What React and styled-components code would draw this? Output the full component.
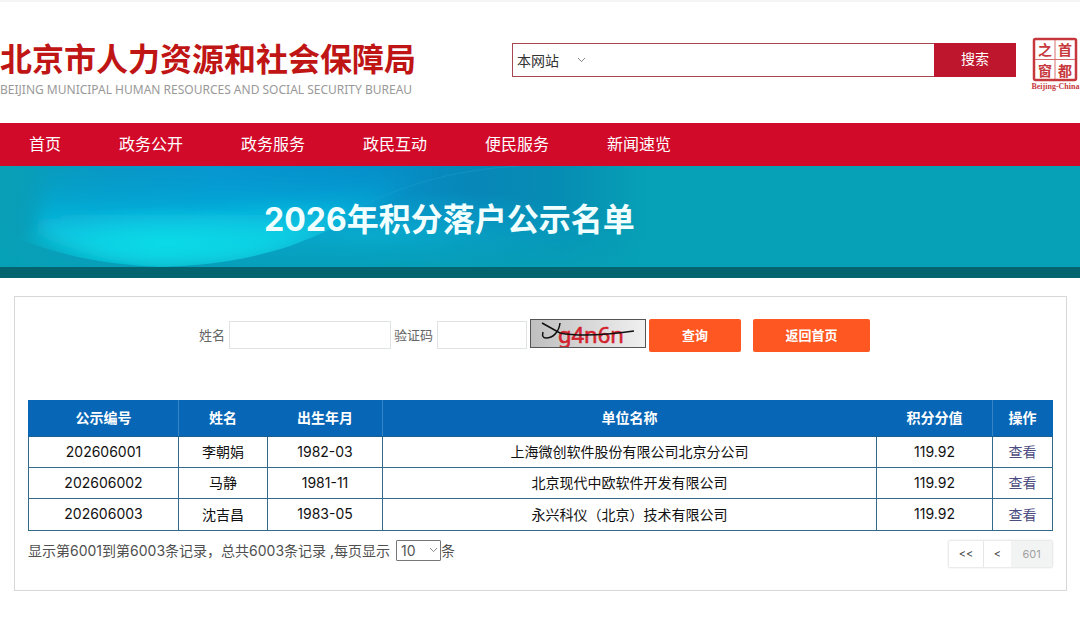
import React from "react";
import styled, { createGlobalStyle } from "styled-components";

const GlobalStyle = createGlobalStyle`
  * { box-sizing: border-box; }
  body {
    margin: 0;
    background: #fff;
    color: #111;
    font-family: Inter, "Noto Sans CJK SC", sans-serif;
    font-size: 14px;
  }
  button, input, select { font-family: inherit; font-size: inherit; }
  a { text-decoration: none; color: inherit; }
`;

const Header = styled.header`
  display: flex;
  align-items: flex-start;
  height: 123px;
  padding-top: 35px;
  border-top: 2px solid #f5f5f5;
`;

const Brand = styled.a`
  flex: none;
  width: 416px;
  padding-top: 1px;
  white-space: nowrap;
`;

const BrandName = styled.h1`
  margin: 0;
  font-size: 32px;
  line-height: 44px;
  font-weight: 700;
  color: #c01515;
`;

const BrandLatin = styled.p`
  margin: 0;
  font-family: "Noto Sans", sans-serif;
  font-size: 12px;
  line-height: 16px;
  color: #999;
`;

const Search = styled.form`
  display: flex;
  flex: 1;
  height: 34px;
  margin: 6px 15px 0 96px;
  border: 1px solid #a5484f;
`;

const SelectWrap = styled.span`
  position: relative;
  display: inline-flex;
  align-items: center;

  svg {
    position: absolute;
    right: ${(p) => p.$inset}px;
    pointer-events: none;
  }
`;

const ScopeSelect = styled.select`
  width: 80px;
  height: 28px;
  padding: 0 4px;
  border: 0;
  background: transparent;
  color: #333;
  appearance: none;
`;

const SearchInput = styled.input`
  flex: 1;
  min-width: 0;
  border: 0;
  background: transparent;
  outline: none;
`;

const SearchButton = styled.button`
  width: 82px;
  margin: -1px;
  padding: 0 0 4px;
  border: 0;
  background: #bd162d;
  color: #fff;
`;

const SealLink = styled.a`
  flex: none;
  width: 49px;
  height: 54px;
`;

const Nav = styled.nav`
  display: flex;
  gap: 58px;
  height: 43px;
  padding: 0 29px;
  background: #d20a2a;
  color: #fff;
  font-size: 16px;
  line-height: 42px;
`;

const Banner = styled.section`
  position: relative;
  height: 112px;
  padding-left: 264px;
  overflow: hidden;
  background: #06a1b6;
  border-bottom: 11px solid #04646f;

  svg {
    position: absolute;
    top: 0;
    left: 0;
  }
`;

const BannerTitle = styled.h2`
  position: relative;
  margin: 0;
  font-size: 32px;
  line-height: 108px;
  font-weight: 700;
  color: #f2ffff;
`;

const Panel = styled.main`
  margin: 18px 13px 0 14px;
  padding: 22px 13px;
  border: 1px solid #d8d8d8;
`;

const Filter = styled.form`
  display: flex;
  justify-content: center;
  align-items: center;
  height: 33px;
  padding-right: 12px;
  font-size: 13px;
  color: #666;
`;

const Field = styled.label`
  display: flex;
  align-items: center;
  gap: 4px;
  height: 31px;
  margin: 0 3px 2px 0;
`;

const TextInput = styled.input`
  width: ${(p) => p.$width}px;
  height: 28px;
  border: 1px solid #dfe3e3;
  background: #fff;
  outline: none;
`;

const Captcha = styled.svg`
  align-self: flex-start;
  width: 116px;
  height: 29px;
  border: 1px solid #555;
  background: linear-gradient(90deg, #bfbfbf, #f0f0f0);
`;

const ActionButton = styled.button`
  width: ${(p) => p.$width}px;
  height: 33px;
  margin-left: ${(p) => p.$gap}px;
  padding: 0 0 3px;
  border: 0;
  border-radius: 2px;
  background: #ff5722;
  color: #fff;
  font-size: 13px;
  font-weight: 700;
`;

const Table = styled.table`
  width: 100%;
  margin-top: 48px;
  border-collapse: collapse;
  table-layout: fixed;
  text-align: center;
`;

const HeadCell = styled.th`
  width: ${(p) => (p.$width ? `${p.$width}px` : "auto")};
  height: 36px;
  padding: 0 0 4px;
  border: 1px solid #0766b6;
  border-right-color: ${(p) => (p.$divider ? "#3484c6" : "#0766b6")};
  border-bottom-color: #17608f;
  background: #0766b6;
  color: #fff;
  font-weight: 700;
`;

const Cell = styled.td`
  height: 31px;
  padding: 0 0 2px;
  border: 1px solid #33698a;

  tr:last-child > & { height: 32px; }
`;

const ViewLink = styled.a`
  color: #4c4c80;
`;

const Footer = styled.footer`
  display: flex;
  justify-content: space-between;
  margin-top: 9px;
  color: #505050;
`;

const Summary = styled.label`
  display: flex;
  align-items: center;
  height: 20px;
  white-space: pre;
`;

const SizeSelect = styled.select`
  width: 45px;
  height: 21px;
  margin-left: 6px;
  padding: 0 4px;
  border: 1px solid #777;
  border-radius: 1px;
  background: #fff;
  color: #555;
  appearance: none;
`;

const Pager = styled.div`
  display: flex;
  height: 28px;
  border: 1px solid #ebebeb;
  border-radius: 2px;
  box-shadow: 0 0 2px #e4e4e4;
`;

const PageButton = styled.button`
  width: ${(p) => p.$width}px;
  padding: 0;
  border: 0;
  border-left: ${(p) => (p.$divided ? "1px solid #e6e6e6" : "0")};
  background: ${(p) => (p.disabled ? "#f2f4f4" : "#fff")};
  color: ${(p) => (p.disabled ? "#a0a0a0" : "#444")};
  font-size: 11px;
`;

const Chevron = () => (
  <svg width="9" height="6" viewBox="0 0 9 6" fill="none" stroke="#888" aria-hidden="true">
    <path d="M1 1l3.5 3.6L8 1" />
  </svg>
);

const Seal = () => (
  <svg width="49" height="54" viewBox="0 0 49 54" role="img" aria-label="首都之窗">
    <rect x="3" y="2" width="42" height="41" rx="1.5" fill="#fff" stroke="#c6383c" strokeWidth="2.5" />
    <path d="M24 3v39M4 22.500h40" stroke="#d86a6c" />
    <g
      fill="#c6383c"
      fontFamily="'Noto Sans CJK SC', sans-serif"
      fontWeight="700"
      fontSize="14"
      textAnchor="middle"
    >
      <text x="14" y="18">之</text>
      <text x="34" y="18">首</text>
      <text x="14" y="39">窗</text>
      <text x="34" y="39">都</text>
    </g>
    <text
      x="24.500"
      y="52"
      fill="#c6383c"
      fontFamily="'Liberation Serif', serif"
      fontWeight="700"
      fontSize="8"
      textAnchor="middle"
    >
      Beijing-China
    </text>
  </svg>
);

const BannerArt = () => (
  <svg width="1080" height="101" viewBox="0 0 1080 101" aria-hidden="true">
    <defs>
      <linearGradient id="base">
        <stop offset="0" stopColor="#08a0b6" />
        <stop offset="0.1" stopColor="#0998c4" />
        <stop offset="0.2" stopColor="#0797cf" />
        <stop offset="0.34" stopColor="#068fc9" />
        <stop offset="0.44" stopColor="#0787b8" />
        <stop offset="0.52" stopColor="#068db3" />
        <stop offset="0.6" stopColor="#06a1b6" />
      </linearGradient>
      <linearGradient id="lens" x2="0" y2="1">
        <stop offset="0" stopColor="#069bd4" stopOpacity="0" />
        <stop offset="0.5" stopColor="#08b6de" stopOpacity="0.8" />
        <stop offset="0.85" stopColor="#0bd0e4" />
        <stop offset="1" stopColor="#0cc8d4" />
      </linearGradient>
      <radialGradient id="floor">
        <stop offset="0" stopColor="#08b0d4" stopOpacity="0.9" />
        <stop offset="1" stopColor="#08a9cb" stopOpacity="0" />
      </radialGradient>
      <linearGradient id="ground" x2="0" y2="1">
        <stop offset="0" stopColor="#06a1b6" stopOpacity="0" />
        <stop offset="1" stopColor="#06a1b6" stopOpacity="0.8" />
      </linearGradient>
      <radialGradient id="glow">
        <stop offset="0" stopColor="#0adfe9" />
        <stop offset="1" stopColor="#0adfe9" stopOpacity="0" />
      </radialGradient>
      <filter id="soft" x="-20%" y="-20%" width="140%" height="140%">
        <feGaussianBlur stdDeviation="9" />
      </filter>
      <clipPath id="bowl">
        <path d="M0 0H470C410 22 350 58 290 80C245 94 215 99 160 101C100 98 60 90 0 66Z" />
      </clipPath>
    </defs>
    <rect width="1080" height="101" fill="url(#base)" />
    <ellipse cx="370" cy="72" rx="260" ry="50" fill="url(#floor)" />
    <rect y="56" width="700" height="45" fill="url(#ground)" />
    <g clipPath="url(#bowl)">
      <path
        d="M45 0H440C390 30 345 60 290 82C245 96 210 100 165 100C110 98 70 84 36 68Z"
        fill="url(#lens)"
        filter="url(#soft)"
      />
      <ellipse cx="165" cy="76" rx="150" ry="36" fill="url(#glow)" opacity="0.8" />
      <ellipse cx="280" cy="66" rx="110" ry="36" fill="url(#glow)" opacity="0.3" />
    </g>
    <path d="M350 46C400 20 450 4 520 0" stroke="#2ba8d2" strokeOpacity="0.3" fill="none" />
  </svg>
);

const navItems = ["首页", "政务公开", "政务服务", "政民互动", "便民服务", "新闻速览"];

const columns = [
  { title: "公示编号", width: 150, divider: true },
  { title: "姓名", width: 89 },
  { title: "出生年月", width: 115, divider: true },
  { title: "单位名称" },
  { title: "积分分值", width: 116, divider: true },
  { title: "操作", width: 60 },
];

const records = [
  ["202606001", "李朝娟", "1982-03", "上海微创软件股份有限公司北京分公司", "119.92"],
  ["202606002", "马静", "1981-11", "北京现代中欧软件开发有限公司", "119.92"],
  ["202606003", "沈吉昌", "1983-05", "永兴科仪（北京）技术有限公司", "119.92"],
];

export default function App() {
  return (
    <>
      <GlobalStyle />
      <Header>
        <Brand href="#">
          <BrandName>北京市人力资源和社会保障局</BrandName>
          <BrandLatin>BEIJING MUNICIPAL HUMAN RESOURCES AND SOCIAL SECURITY BUREAU</BrandLatin>
        </Brand>
        <Search onSubmit={(e) => e.preventDefault()}>
          <SelectWrap $inset={7}>
            <ScopeSelect aria-label="搜索范围">
              <option>本网站</option>
            </ScopeSelect>
            <Chevron />
          </SelectWrap>
          <SearchInput type="text" aria-label="搜索" />
          <SearchButton type="submit">搜索</SearchButton>
        </Search>
        <SealLink href="#">
          <Seal />
        </SealLink>
      </Header>
      <Nav>
        {navItems.map((item) => (
          <a href="#" key={item}>{item}</a>
        ))}
      </Nav>
      <Banner>
        <BannerArt />
        <BannerTitle>2026年积分落户公示名单</BannerTitle>
      </Banner>
      <Panel>
        <Filter onSubmit={(e) => e.preventDefault()}>
          <Field>
            姓名
            <TextInput type="text" $width={162} />
          </Field>
          <Field>
            验证码
            <TextInput type="text" $width={90} />
          </Field>
          <Captcha viewBox="0 0 114 27" role="img" aria-label="验证码图片">
            <text
              x="27"
              y="23"
              fill="#d3222e"
              stroke="#d3222e"
              strokeWidth="0.6"
              fontFamily="'Noto Sans', sans-serif"
              fontSize="22"
              fontWeight="400"
            >
              g4n6n
            </text>
            <path
              d="M11 3L29 13C50 17 75 15 103 11M29 3C28 12 22 18 15 18C12 18 11 16 12 12"
              fill="none"
              stroke="#111"
              strokeWidth="1.500"
            />
          </Captcha>
          <ActionButton type="submit" $width={92} $gap={3}>查询</ActionButton>
          <ActionButton type="button" $width={117} $gap={12}>返回首页</ActionButton>
        </Filter>
        <Table>
          <thead>
            <tr>
              {columns.map((c) => (
                <HeadCell key={c.title} $width={c.width} $divider={c.divider}>{c.title}</HeadCell>
              ))}
            </tr>
          </thead>
          <tbody>
            {records.map((row) => (
              <tr key={row[0]}>
                {row.map((value) => (
                  <Cell key={value}>{value}</Cell>
                ))}
                <Cell>
                  <ViewLink href="#">查看</ViewLink>
                </Cell>
              </tr>
            ))}
          </tbody>
        </Table>
        <Footer>
          <Summary>
            显示第6001到第6003条记录，总共6003条记录 ,每页显示
            <SelectWrap $inset={3}>
              <SizeSelect>
                <option>10</option>
              </SizeSelect>
              <Chevron />
            </SelectWrap>
            条
          </Summary>
          <Pager>
            <PageButton type="button" $width={34}>&lt;&lt;</PageButton>
            <PageButton type="button" $width={28} $divided>&lt;</PageButton>
            <PageButton type="button" $width={41} disabled>601</PageButton>
          </Pager>
        </Footer>
      </Panel>
    </>
  );
}
